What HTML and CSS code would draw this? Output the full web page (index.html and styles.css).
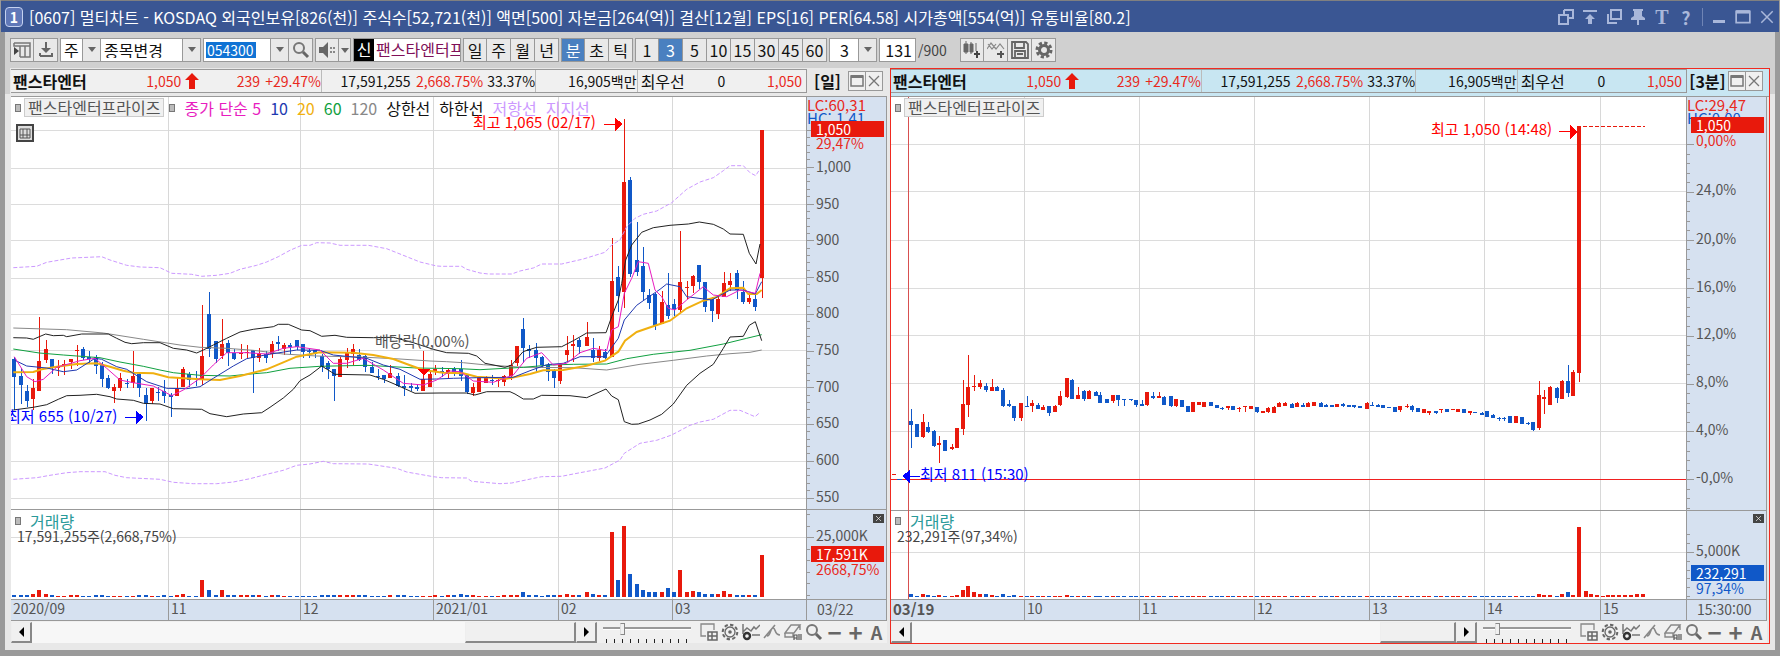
FILE: index.html
```html
<!DOCTYPE html>
<html lang="ko">
<head>
    <meta charset="UTF-8">
    <meta name="viewport" content="width=device-width, initial-scale=1.0">
    <title>[0607] 멀티차트</title>
    <link rel="stylesheet" href="styles.css">
</head>
<body>
    <svg class="symbols" aria-hidden="true">
        <symbol id="i-restore" viewBox="0 0 16 16"><path d="M6 1h9v8h-5M1 6h9v9H1zM6 6V1" fill="none" stroke="currentColor" stroke-width="2"/></symbol>
        <symbol id="i-top" viewBox="0 0 16 16"><path d="M1 1h14v2H1zM8 5l5 5h-3v5H6v-5H3z" fill="currentColor"/></symbol>
        <symbol id="i-copy" viewBox="0 0 16 16"><path d="M5 1h10v9H5zM2 5v9h9" fill="none" stroke="currentColor" stroke-width="2"/></symbol>
        <symbol id="i-pin" viewBox="0 0 16 16"><path d="M3 0h10v2h-1v5l3 2v2H9v5H7v-5H1V9l3-2V2H3z" fill="currentColor"/></symbol>
        <symbol id="i-panel" viewBox="0 0 18 18"><path d="M1 2h16v14H7M7 5h10M12 5v11M1 2v3h6v11" fill="none" stroke="#777" stroke-width="1.5"/><path d="M1 6l5 4-5 4z" fill="#444"/></symbol>
        <symbol id="i-down" viewBox="0 0 18 18"><path d="M9 1v9M3 15h12v-3M3 15v-3" fill="none" stroke="#666" stroke-width="2"/><path d="M4 7h10l-5 5z" fill="#666"/></symbol>
        <symbol id="i-find" viewBox="0 0 18 18"><circle cx="7" cy="7" r="5" fill="none" stroke="#777" stroke-width="2"/><path d="M11 11l5 5" stroke="#666" stroke-width="3"/></symbol>
        <symbol id="i-sound" viewBox="0 0 18 18"><path d="M1 6h4l5-5v16l-5-5H1z" fill="#666"/><path d="M12 6h2v2h-2zM12 10h2v2h-2zM15 6h2v2h-2zM15 10h2v2h-2z" fill="#888"/></symbol>
        <symbol id="i-candles" viewBox="0 0 18 18"><path d="M1 3h4v8H1zM7 3h3v8H7zM3 0v13M8 1v12M13 2v8" fill="#666" stroke="#666"/><path d="M11 13h6M14 10v7" stroke="#444" stroke-width="2"/></symbol>
        <symbol id="i-waves" viewBox="0 0 18 18"><path d="M0 8l4-6 5 6 4-5 4 5M1 3l4 5 4-5" fill="none" stroke="#888" stroke-width="1.2"/><path d="M10 13h7M14 10v7" stroke="#555" stroke-width="2"/></symbol>
        <symbol id="i-save" viewBox="0 0 18 18"><path d="M1 1h14l2 2v14H1zM4 1v6h9V1M4 17v-7h10v7M6 13h6" fill="none" stroke="#666" stroke-width="1.8"/></symbol>
        <symbol id="i-gear" viewBox="0 0 18 18"><circle cx="9" cy="9" r="7" fill="none" stroke="#666" stroke-width="3" stroke-dasharray="3.2 2.3"/><circle cx="9" cy="9" r="4.5" fill="none" stroke="#666" stroke-width="3"/></symbol>
        <symbol id="i-max" viewBox="0 0 14 14"><path d="M1 2h12v10H1z" fill="none" stroke="currentColor" stroke-width="1.5"/><path d="M1 1h12v3H1z" fill="currentColor"/></symbol>
        <symbol id="i-x" viewBox="0 0 14 14"><path d="M2 2l10 10M12 2L2 12" stroke="currentColor" stroke-width="1.3"/></symbol>
        <symbol id="i-up" viewBox="0 0 16 16"><path d="M8 0l7 7h-4v9H5V7H1z" fill="#e8190c"/></symbol>
        <symbol id="i-grid" viewBox="0 0 18 18"><path d="M1 1h16v16H1z" fill="#ddd" stroke="#444" stroke-width="2"/><path d="M4 5h10v9H4zM7 5v9M11 5v9M4 11h10" fill="none" stroke="#555"/></symbol>
        <symbol id="t-add" viewBox="0 0 18 18"><path d="M6 13H1V1h13v6" fill="none" stroke="#888" stroke-width="1.3"/><path d="M8 9h9v8H8zM12 9v8M8 13h9" fill="none" stroke="#666" stroke-width="1.5"/></symbol>
        <symbol id="t-gear" viewBox="0 0 18 18"><circle cx="9" cy="9" r="7.3" fill="none" stroke="#666" stroke-width="2" stroke-dasharray="3.4 2.3"/><circle cx="9" cy="9" r="5" fill="none" stroke="#666" stroke-width="1.3"/><circle cx="9" cy="9" r="1.8" fill="#666"/></symbol>
        <symbol id="t-line" viewBox="0 0 18 18"><path d="M1 1v10M1 9l4-4 4 3 3-4 2 2 4-4M10 12h8" fill="none" stroke="#777" stroke-width="1.5"/><circle cx="5" cy="13" r="3" fill="none" stroke="#333" stroke-width="2.4"/></symbol>
        <symbol id="t-draw" viewBox="0 0 18 18"><path d="M1 15L12 2M4 13c4 0 3-8 6-8s1 7 7 7" fill="none" stroke="#888" stroke-width="1.6"/></symbol>
        <symbol id="t-erase" viewBox="0 0 18 18"><path d="M1 10l6-8h9l-6 8zM1 10v4h8v-4M16 2v5" fill="none" stroke="#888" stroke-width="1.4"/><path d="M10 17v-5h3v5M10 15h3M15 11v6M17 11v6" fill="none" stroke="#555" stroke-width="1.2"/></symbol>
    </svg>

    <div class="window">
        <div class="titlebar">
            <span class="screen-no">1</span>
            <h1>[0607] 멀티차트 - KOSDAQ 외국인보유[826(천)] 주식수[52,721(천)] 액면[500] 자본금[264(억)] 결산[12월] EPS[16] PER[64.58] 시가총액[554(억)] 유통비율[80.2]</h1>
            <div class="title-buttons">
                <button aria-label="복원"><svg><use href="#i-restore"/></svg></button>
                <button aria-label="맨 위"><svg><use href="#i-top"/></svg></button>
                <button aria-label="복사"><svg><use href="#i-copy"/></svg></button>
                <button aria-label="고정"><svg><use href="#i-pin"/></svg></button>
                <button class="serif">T</button>
                <button>?</button>
                <i class="bar"></i>
                <button aria-label="최소화"><i class="min"></i></button>
                <button aria-label="최대화"><svg><use href="#i-max"/></svg></button>
                <button aria-label="닫기"><svg><use href="#i-x"/></svg></button>
            </div>
        </div>

        <div class="toolbar">
            <div class="group">
                <button aria-label="패널"><svg><use href="#i-panel"/></svg></button>
                <button aria-label="내리기"><svg><use href="#i-down"/></svg></button>
            </div>
            <div class="group">
                <div class="combo kind"><select aria-label="구분"><option>주</option></select></div>
                <div class="combo change"><select aria-label="종목변경"><option>종목변경</option></select></div>
            </div>
            <div class="group">
                <div class="combo code"><input type="text" value="054300" aria-label="종목코드"></div>
                <button aria-label="검색"><svg><use href="#i-find"/></svg></button>
            </div>
            <div class="group">
                <button aria-label="소리"><svg><use href="#i-sound"/></svg></button>
                <button class="drop" aria-label="소리 메뉴"></button>
            </div>
            <div class="group stock"><b>신</b><span>팬스타엔터프라이즈</span></div>
            <div class="group">
                <button>일</button>
                <button>주</button>
                <button>월</button>
                <button>년</button>
            </div>
            <div class="group">
                <button class="on">분</button>
                <button>초</button>
                <button>틱</button>
            </div>
            <div class="group">
                <button>1</button>
                <button class="on">3</button>
                <button>5</button>
                <button>10</button>
                <button>15</button>
                <button>30</button>
                <button>45</button>
                <button>60</button>
            </div>
            <div class="group">
                <div class="combo minute"><select aria-label="분 단위"><option>3</option></select></div>
            </div>
            <div class="group count"><input type="text" value="131" aria-label="봉 개수"></div>
            <span class="total">/900</span>
            <div class="group">
                <button aria-label="차트 추가"><svg><use href="#i-candles"/></svg></button>
                <button aria-label="지표 추가"><svg><use href="#i-waves"/></svg></button>
                <button aria-label="저장"><svg><use href="#i-save"/></svg></button>
                <button aria-label="설정"><svg><use href="#i-gear"/></svg></button>
            </div>
        </div>

        <div class="panels">
            <section class="panel">
                <header class="head">
                    <div class="quote">
                        <b>팬스타엔터</b>
                        <span class="up">1,050</span>
                        <svg><use href="#i-up"/></svg>
                        <span class="up">239</span>
                        <span class="up">+29.47%</span>
                        <span class="cut">17,591,255</span>
                        <span class="up">2,668.75%</span>
                        <span>33.37%</span>
                        <span class="cut">16,905백만</span>
                        <span class="cut best">최우선</span>
                        <span>0</span>
                        <span class="up">1,050</span>
                    </div>
                    <b class="period">[일]</b>
                    <button aria-label="최대화"><svg><use href="#i-max"/></svg></button>
                    <button aria-label="닫기"><svg><use href="#i-x"/></svg></button>
                </header>
                <div class="chart" data-chart="daily">
                    <div class="plot">
                        <svg class="canvas" viewBox="11 97 795 502" preserveAspectRatio="none"></svg>
                        <div class="legend">
                            <i class="dot"></i><span class="name">팬스타엔터프라이즈</span><i class="dot"></i>
                            <span class="ma5">종가 단순 5</span>
                            <span class="ma10">10</span>
                            <span class="ma20">20</span>
                            <span class="ma60">60</span>
                            <span class="ma120">120</span>
                            <span>상한선</span>
                            <span>하한선</span>
                            <span class="env">저항선</span>
                            <span class="env">지지선</span>
                        </div>
                        <button class="sheet" aria-label="표"><svg><use href="#i-grid"/></svg></button>
                        <div class="volume-legend">
                            <p><i class="dot"></i>거래량</p>
                            <p>17,591,255주(2,668,75%)</p>
                        </div>
                    </div>
                    <div class="axis"><button class="pane-close" aria-label="지표 닫기"><svg><use href="#i-x"/></svg></button></div>
                    <div class="times"></div>
                    <div class="now">03/22</div>
                </div>
                <footer class="tools">
                    <div class="scroll">
                        <button class="prev" aria-label="이전"></button>
                        <div class="thumb" style="width: 19%"></div>
                        <button class="next" aria-label="다음"></button>
                    </div>
                    <div class="zoom"><input type="range" value="20" aria-label="확대"></div>
                    <button aria-label="추가"><svg><use href="#t-add"/></svg></button>
                    <button aria-label="설정"><svg><use href="#t-gear"/></svg></button>
                    <button aria-label="지표"><svg><use href="#t-line"/></svg></button>
                    <button aria-label="그리기"><svg><use href="#t-draw"/></svg></button>
                    <button aria-label="모두 지우기"><svg><use href="#t-erase"/></svg></button>
                    <button aria-label="돋보기"><svg><use href="#i-find"/></svg></button>
                    <button class="sign">−</button>
                    <button class="sign">+</button>
                    <button class="auto">A</button>
                </footer>
            </section>

            <section class="panel active">
                <header class="head">
                    <div class="quote">
                        <b>팬스타엔터</b>
                        <span class="up">1,050</span>
                        <svg><use href="#i-up"/></svg>
                        <span class="up">239</span>
                        <span class="up">+29.47%</span>
                        <span class="cut">17,591,255</span>
                        <span class="up">2,668.75%</span>
                        <span>33.37%</span>
                        <span class="cut">16,905백만</span>
                        <span class="cut best">최우선</span>
                        <span>0</span>
                        <span class="up">1,050</span>
                    </div>
                    <b class="period">[3분]</b>
                    <button aria-label="최대화"><svg><use href="#i-max"/></svg></button>
                    <button aria-label="닫기"><svg><use href="#i-x"/></svg></button>
                </header>
                <div class="chart" data-chart="minute">
                    <div class="plot">
                        <svg class="canvas" viewBox="891 97 795 502" preserveAspectRatio="none"></svg>
                        <div class="legend">
                            <i class="dot"></i><span class="name">팬스타엔터프라이즈</span>
                        </div>
                        <div class="volume-legend">
                            <p><i class="dot"></i>거래량</p>
                            <p>232,291주(97,34%)</p>
                        </div>
                    </div>
                    <div class="axis"><button class="pane-close" aria-label="지표 닫기"><svg><use href="#i-x"/></svg></button></div>
                    <div class="times"></div>
                    <div class="now">15:30:00</div>
                </div>
                <footer class="tools">
                    <div class="scroll">
                        <button class="prev" aria-label="이전"></button>
                        <div class="thumb" style="width: 13%"></div>
                        <button class="next" aria-label="다음"></button>
                    </div>
                    <div class="zoom"><input type="range" value="15" aria-label="확대"></div>
                    <button aria-label="추가"><svg><use href="#t-add"/></svg></button>
                    <button aria-label="설정"><svg><use href="#t-gear"/></svg></button>
                    <button aria-label="지표"><svg><use href="#t-line"/></svg></button>
                    <button aria-label="그리기"><svg><use href="#t-draw"/></svg></button>
                    <button aria-label="모두 지우기"><svg><use href="#t-erase"/></svg></button>
                    <button aria-label="돋보기"><svg><use href="#i-find"/></svg></button>
                    <button class="sign">−</button>
                    <button class="sign">+</button>
                    <button class="auto">A</button>
                </footer>
            </section>
        </div>
    </div>

    <script src="script.js"></script>
</body>
</html>
```

FILE: styles.css
```css
* {
    box-sizing: border-box;
}

body {
    margin: 0;
    font-family: "Noto Sans CJK KR", "Liberation Sans", sans-serif;
    font-size: 14px;
    line-height: 16px;
    color: #111;
}

button, input, select {
    font: inherit;
    color: inherit;
    margin: 0;
    padding: 0;
    border: 0;
    border-radius: 0;
    background: none;
}

button {
    display: flex;
    align-items: center;
    justify-content: center;
}

p {
    margin: 0;
}

.symbols {
    display: none;
}

.window {
    display: flex;
    flex-direction: column;
    min-height: 100vh;
    background: #e8e8e8;
    border: solid #9a9a9a;
    border-width: 0 5px 6px;
}

/* title bar */
.titlebar {
    display: flex;
    align-items: center;
    gap: 6px;
    height: 32px;
    margin: 0 -4px;
    padding: 0 4px;
    background: #3a5693;
    border-top: 1px solid #808080;
    color: #fff;
}

.screen-no {
    width: 18px;
    height: 20px;
    border: 1px solid #c5d2f0;
    border-radius: 4px;
    background: #6078b8;
    font-weight: bold;
    line-height: 18px;
    text-align: center;
}

h1 {
    flex: 1;
    margin: 0;
    font-size: 16px;
    font-weight: normal;
    line-height: 24px;
    white-space: nowrap;
    overflow: hidden;
}

.title-buttons {
    display: flex;
    align-items: center;
    gap: 8px;
    color: #a9b7da;
}

.title-buttons button {
    width: 16px;
    height: 20px;
    font-size: 18px;
    font-weight: bold;
}

.title-buttons svg {
    width: 16px;
    height: 16px;
}

.title-buttons .serif {
    font-family: "Liberation Serif", serif;
    font-size: 20px;
}

.title-buttons .bar {
    width: 1px;
    height: 18px;
    background: #6f84b5;
}

.title-buttons .min {
    width: 12px;
    height: 3px;
    margin-top: 10px;
    background: #a9b7da;
}

/* toolbar */
.toolbar {
    display: flex;
    align-items: center;
    gap: 2px;
    height: 36px;
    padding: 0 5px;
    background: #d0d0d0;
    font-size: 16px;
}

.group {
    display: flex;
    height: 24px;
    border: 1px solid #999;
    background: #e9e9e9;
}

.group > * + * {
    border-left: 1px solid #999;
}

.group button {
    width: 24px;
    height: 22px;
}

.group > button:first-child {
    width: 22px;
}

.group svg {
    flex: none;
    width: 18px;
    height: 18px;
}

.group button.on {
    background: #4a80c0;
    color: #fff;
}

.group .drop {
    width: 12px;
}

.combo {
    position: relative;
    display: flex;
    background: #fff;
}

.combo select, .combo input {
    appearance: none;
    width: 100%;
    padding: 0 18px 0 3px;
    outline: none;
}

.combo::after {
    content: "";
    position: absolute;
    top: 0;
    right: 0;
    bottom: 0;
    width: 17px;
    border-left: 1px solid #999;
    background: #e9e9e9;
}

.combo::before, .drop::before {
    content: "";
    z-index: 1;
    width: 0;
    height: 0;
    border: 4px solid transparent;
    border-top: 5px solid #666;
    border-bottom: 0;
}

.combo::before {
    position: absolute;
    top: 8px;
    right: 4px;
}

.kind { width: 39px; }
.change { width: 100px; }
.code { width: 84px; }
.minute { width: 46px; }

.kind select {
    padding-right: 17px;
}

.minute select {
    padding-left: 10px;
}

.code input {
    background: linear-gradient(#1173d4, #1173d4) 2px 3px / 50px 16px no-repeat;
    color: #fff;
    font-size: 14px;
}

.stock {
    width: 108px;
    background: #fff;
    overflow: hidden;
    white-space: nowrap;
    line-height: 21px;
}

.stock b {
    flex: none;
    width: 20px;
    background: #000;
    color: #fff;
    font-weight: normal;
    text-align: center;
}

.stock span {
    padding-left: 2px;
    border: 0;
    color: #801058;
}

.count {
    width: 37px;
    background: #fff;
}

.count input {
    width: 100%;
    padding-right: 3px;
    text-align: right;
}

.total {
    width: 40px;
    color: #444;
    font-size: 14px;
}

/* panels */
.panels {
    flex: 1;
    display: grid;
    grid-template-columns: 1fr 1fr;
    padding: 0 5px 6px;
    background: linear-gradient(#d0d0d0 26px, #e8e8e8 26px);
}

.panel {
    display: flex;
    flex-direction: column;
    min-width: 0;
    padding-right: 2px;
    border: 1px solid transparent;
    background: #e8e8e8;
}

.panel.active {
    border-color: #f02a20;
}

.head {
    display: flex;
    align-items: center;
    height: 28px;
    padding-bottom: 3px;
    border-bottom: 1px solid #999;
}

.active .head {
    margin-right: -2px;
    background: #c8e6f2;
}

.quote {
    flex: 1;
    display: grid;
    grid-template-columns: 134fr 37fr 18fr 60fr 61fr 90fr 73fr 52fr 102fr 50fr 39fr 77fr;
    align-items: center;
    height: 24px;
    padding-right: 4px;
    border: 1px solid #999;
    border-left: 0;
    background: #f0f0f0;
    text-align: right;
    white-space: nowrap;
}

.active .quote {
    background: #c8e6f2;
}

.quote b {
    padding-left: 2px;
    font-size: 16px;
    text-align: left;
}

.quote svg {
    width: 16px;
    height: 16px;
    margin-left: 3px;
}

.quote .cut {
    border-left: 1px solid #bbb;
    line-height: 22px;
}

.quote .best {
    padding-left: 3px;
    font-size: 16px;
    text-align: left;
}

.up {
    color: #e8291c;
}

.head .period {
    width: 41px;
    font-size: 16px;
    text-align: center;
}

.head button {
    width: 18px;
    height: 20px;
    border: 1px solid #999;
    background: #f0f0f0;
    color: #777;
}

.head button + button {
    margin: 0 4px 0 -1px;
}

.active .head button + button {
    margin-right: 6px;
}

.head button svg {
    width: 14px;
    height: 14px;
}

.chart {
    flex: 1;
    display: grid;
    grid-template-columns: 1fr 81px;
    grid-template-rows: 1fr 22px;
    color: #555;
}

.plot, .axis, .times {
    position: relative;
    overflow: hidden;
    white-space: nowrap;
}

.plot {
    background: #fff;
}

.canvas {
    position: absolute;
    width: 100%;
    height: 100%;
    shape-rendering: crispEdges;
}

.canvas polyline {
    shape-rendering: auto;
}

.axis {
    background: #d6e1f0;
    border: solid #999;
    border-width: 0 1px 0 1px;
}

.times, .now {
    border: solid #999;
    border-width: 1px 1px 1px 0;
    background: #d6e1f0;
    line-height: 18px;
}

.now {
    padding-left: 10px;
    border-left: 1px solid #999;
}

.times {
    border-right: 0;
}

.legend {
    position: absolute;
    top: 1px;
    left: 4px;
    display: flex;
    align-items: center;
    gap: 9px;
    font-size: 16px;
    line-height: 18px;
    color: #111;
}

.dot {
    display: inline-block;
    width: 6px;
    height: 8px;
    border: 1px solid #777;
    background: #bbb;
}

.legend .dot + .name {
    margin-left: -6px;
}

.legend .name + .dot {
    margin-left: -4px;
}

.name {
    padding: 0 3px;
    border: 1px solid #ccc;
    background: #f0f0f0;
    color: #555;
    line-height: 17px;
}

.ma5 { color: #e81cc0; }
.ma10 { color: #2038b0; }
.ma20 { color: #f0b010; }
.ma60 { color: #10a040; }
.ma120 { color: #888; }
.env { color: #cc99ff; }

.sheet {
    position: absolute;
    top: 27px;
    left: 5px;
}

.sheet svg {
    width: 18px;
    height: 18px;
}

.volume-legend {
    position: absolute;
    top: 83%;
    left: 4px;
    color: #444;
}

.volume-legend p {
    line-height: 15px;
}

.volume-legend p:first-child {
    display: flex;
    align-items: center;
    gap: 9px;
    color: #2a9a9a;
    font-size: 16px;
}

.volume-legend p + p {
    padding-left: 2px;
}

/* labels put on the charts by script.js */
.mark, .tag, .note, .time {
    position: absolute;
    transform: translateY(-50%);
}

.mark, .tag {
    left: 9px;
}

.mark.wide {
    left: 0;
    font-size: 15px;
}

.tick {
    position: absolute;
    left: 0;
    width: 3px;
    height: 1px;
    background: #999;
}

.tick.major {
    width: 7px;
}

.tag {
    left: 4px;
    right: 2px;
    padding-left: 5px;
    background: #e8190c;
    color: #fff;
}

.tag.fall {
    background: #1058c8;
}

.red { color: #e8291c; }
.blue { color: #1058c8; }

.note {
    font-size: 15px;
}

.note.high { color: #f00; }
.note.low { color: #00f; }

.time {
    top: 10px;
    height: 22px;
    padding-left: 2px;
    border-left: 1px solid #999;
    line-height: 19px;
}

.time.first {
    border: 0;
}

.time.day {
    font-size: 15px;
    font-weight: bold;
}

.pane-line {
    position: absolute;
    width: 100%;
    height: 1px;
    background: #999;
}

.pane-close {
    position: absolute;
    top: 83%;
    right: 2px;
    width: 11px;
    height: 9px;
    background: #444;
    color: #fff;
}

.pane-close svg {
    width: 7px;
    height: 7px;
}

/* scroll and drawing tools */
.tools {
    display: flex;
    align-items: center;
    height: 22px;
    background: #f0f0f0;
    color: #666;
}

.scroll {
    flex: 1;
    display: flex;
    justify-content: flex-end;
    height: 21px;
    background: #f7f7f7;
}

.scroll button, .thumb {
    border: 1px solid #eee;
    border-right: 2px solid #888;
    border-bottom: 2px solid #888;
    background: #f0f0f0;
}

.scroll button {
    width: 21px;
}

.scroll .prev {
    margin-right: auto;
}

.prev::before, .next::before {
    content: "";
    border: 5px solid transparent;
}

.prev::before {
    border-left: 0;
    border-right-color: #000;
}

.next::before {
    border-right: 0;
    border-left-color: #000;
}

.zoom {
    width: 101px;
    height: 22px;
    padding: 0 6px;
    background: repeating-linear-gradient(90deg, #222 0 1px, transparent 1px 8px) 9px 18px / 82px 4px no-repeat;
}

.zoom input {
    appearance: none;
    display: block;
    width: 88px;
    height: 15px;
}

.zoom input::-webkit-slider-runnable-track {
    height: 3px;
    border-top: 2px solid #999;
    border-bottom: 1px solid #fff;
}

.zoom input::-webkit-slider-thumb {
    appearance: none;
    width: 5px;
    height: 12px;
    margin-top: -6px;
    border: 1px solid #888;
    border-left-color: #ddd;
    background: #f0f0f0;
}

.tools > button {
    width: 21px;
    height: 20px;
}

.tools > button svg {
    width: 18px;
    height: 18px;
}

.tools .sign {
    font-size: 24px;
    font-weight: bold;
}

.tools .auto {
    font-size: 18px;
    font-weight: bold;
}
```

FILE: script.js
```js
// Shapes are kept in thirds of a pixel, each block measured from its own origin.
// Candle rows: x, high, body top, body bottom, low, colour, volume height
const charts = {
    daily: {
        left: 11,
        split: 509,
        cols: [168, 300, 433, 558, 672],
        rows: [130, 168, 204, 240, 278, 314, 350, 387, 424, 461, 498, 537],
        candles: [
            [0, 130, `43 680 687 740 840 b 6|62 715 738 764 823 b 6|81 765 784 812 832 b 6|99 748 773 808 840 r 10
118 562 693 782 782 r 21|137 630 656 690 698 r 10|156 687 687 714 733 b 6|175 690 708 713 738 r 3
193 690 702 706 735 r 3|212 686 686 696 718 r 6|230 645 659 663 708 r 6|249 652 656 685 690 b 3
268 664 682 686 700 b 3|287 676 680 708 732 b 6|305 697 704 748 771 b 6|324 736 745 774 778 b 3
343 762 772 782 820 r 3|361 728 745 774 782 r 3|380 746 758 761 773 b 3|399 664 738 760 775 r 3
418 730 732 774 800 b 6|437 773 795 823 872 b 6|456 773 773 812 822 r 3|474 770 786 789 812 b 3
493 750 784 797 820 b 6|512 788 795 801 861 b 3|530 745 778 797 797 r 6|549 710 716 772 772 r 10
568 727 732 750 770 b 3|587 724 744 748 768 b 3|605 525 679 749 765 r 51|628 487 551 658 682 b 21
647 633 633 686 700 b 6|666 566 641 678 686 r 21|684 630 640 670 708 b 6|703 657 669 686 690 b 6
722 643 669 673 688 r 6|740 645 666 670 685 r 6|759 660 660 684 790 b 6|778 655 671 683 697 r 6
797 664 672 684 698 b 3|815 634 641 672 684 r 6|834 619 635 642 664 b 6|853 640 645 657 676 r 3
871 640 645 652 672 b 3|890 630 630 651 660 b 3|909 641 641 667 684 b 3|928 655 664 667 684 b 3
946 660 660 672 685 b 3|965 672 679 710 725 b 6|984 694 700 716 748 b 6|1003 716 718 738 813 b 6
1021 682 686 741 741 r 6|1040 655 668 690 714 r 6|1059 641 657 671 705 r 6|1078 656 675 690 694 b 6
1096 674 678 710 726 b 6|1115 695 710 729 729 b 3|1134 718 738 742 750 b 3|1153 735 735 747 760 b 3
1171 706 728 745 745 r 6|1194 730 738 767 772 b 6|1213 735 769 773 797 b 6|1232 758 769 773 783 b 3
1250 766 772 776 783 b 3|1269 664 748 782 782 r 3|1289 722 732 771 771 r 3|1306 705 718 722 735 r 6
1325 710 723 727 742 b 3|1344 714 720 733 745 r 6|1363 710 718 733 738 b 6`],
            [440, 100, `62 780 807 828 842 b 10|81 822 825 876 882 b 6|99 848 862 878 887 r 6|118 830 833 875 875 r 3
137 828 830 850 850 r 3|155 825 840 843 854 b 3|174 835 839 843 860 r 3|193 825 829 846 857 r 6
212 780 794 828 840 r 6|230 738 738 790 798 r 6|249 653 686 745 788 b 14|268 735 748 752 773 b 6
287 730 749 774 817 b 6|305 768 772 794 803 b 3|324 790 795 816 842 b 6|343 808 812 835 865 b 6
361 792 792 842 853 r 6|380 708 749 765 782 r 10|399 705 731 737 787 r 6|418 715 719 742 763 b 6
440 667 712 738 738 r 14|459 715 750 775 787 b 10|478 738 750 775 782 r 6|496 746 755 773 776 b 6
515 415 543 771 771 r 196|534 499 532 588 637 b 51|553 57 247 577 625 r 212|571 232 240 521 532 b 70
590 367 480 516 528 b 40|609 442 499 577 600 b 21|628 566 584 610 626 b 14|646 580 583 678 689 b 14
665 574 606 672 672 r 14|684 518 615 648 656 b 28|703 597 611 627 647 b 14|721 394 547 630 635 r 81
740 543 562 565 598 r 14|759 524 528 558 580 r 17|778 495 495 546 567 b 14|796 547 547 620 636 b 10
815 590 598 633 667 b 10|834 590 596 641 658 r 10|852 517 548 590 590 r 17|871 520 544 555 574 r 10
890 510 520 570 598 b 6|908 543 575 605 612 b 6|928 583 593 605 612 r 6|946 580 596 621 632 b 6
965 91 91 535 594 r 126`]
        ],
        lines: [
            ['#888', 1, [0, 130, '40,594 200,599 310,609 430,628 540,645 600,652 680,655 760,661 850,672 950,678 1080,681 1200,687 1290,693'], [440, 100, '20,785 70,788 130,794 250,802 400,803 500,810 600,793 700,781 800,768 870,761 930,757 965,750']],
            ['#10a040', 1, [0, 130, '40,657 118,669 190,675 300,683 360,696 430,709 480,720 520,728 600,736 690,738 740,733 800,728 870,715 960,709 1100,706 1250,714'], [440, 100, '60,806 120,809 250,802 330,795 400,793 500,792 560,776 640,763 750,751 850,732 920,715 965,704']],
            ['#f0b010', 2, [0, 130, '40,727 100,726 125,718 170,710 230,702 290,700 330,710 370,722 400,728 460,730 480,735 505,742 600,748 660,750 720,738 800,718 850,697 890,680 960,667 1060,668 1120,675 1180,687 1230,706 1270,720'], [440, 100, '10,818 70,820 110,830 200,836 270,822 310,811 370,810 440,797 495,782 535,755 555,722 590,696 640,679 690,662 740,625 790,602 830,591 870,565 910,563 925,582 950,582 965,570']],
            ['#2038b0', 1, [0, 130, '43,690 80,708 140,714 190,725 230,720 285,685 305,688 350,710 380,718 440,755 500,775 560,776 600,770 640,745 700,708 740,686 800,674 890,660 960,661 1000,675 1050,680 1100,685 1150,705 1200,718 1260,748 1310,747'], [440, 100, '40,835 110,833 220,832 270,812 320,794 370,790 420,770 495,770 535,715 553,660 590,616 620,595 660,568 680,552 720,560 740,590 815,600 870,570 910,570 946,582 965,545']],
            ['#e81cc0', 1, [0, 130, '43,680 80,740 105,755 130,748 170,712 240,692 285,685 320,715 360,750 400,758 460,768 515,797 550,780 600,745 640,705 680,668 740,668 800,672 850,655 890,650 960,660 1000,700 1040,700 1090,685 1150,720 1210,760 1270,765 1310,750 1350,723'], [440, 100, '60,815 100,843 160,847 220,825 260,775 305,758 340,795 380,790 420,758 460,745 500,752 515,690 535,680 553,580 575,535 595,485 625,490 645,570 665,590 685,625 705,630 740,600 790,560 820,585 860,590 900,570 946,580 960,520']],
            ['#222', 1, [0, 130, '40,623 80,624 100,628 118,620 137,612 160,617 190,616 200,620 245,612 325,612 350,625 375,637 395,641 430,638 480,638 520,655 560,660 590,669 610,660 640,645 680,625 720,606 760,598 820,590 835,583 865,583 905,600 930,602 965,619 1005,616 1040,622 1120,623 1180,622 1240,638 1300,658'], [440, 100, '20,758 85,760 110,768 135,790 195,802 215,795 249,755 290,742 365,740 400,722 440,699 498,698 515,650 535,600 545,550 557,480 575,435 605,397 640,383 690,376 745,372 778,366 820,373 850,387 870,402 910,403 928,460 948,492 960,432']],
            ['#222', 1, [0, 130, '40,840 100,832 140,824 175,808 200,797 240,796 290,793 330,800 350,807 400,811 430,820 480,822 520,836 605,838 630,851 680,860 730,852 785,848 810,832 850,804 880,778 900,752 930,735 965,708 1005,733 1110,735 1150,748 1190,765 1245,790'], [440, 100, '0,879 80,879 105,885 140,875 210,875 225,882 250,897 280,897 305,886 390,887 440,893 498,867 515,888 535,899 553,965 575,973 595,972 630,960 665,943 700,912 740,856 780,820 820,793 850,745 870,711 910,709 928,676 946,665 965,722']],
            ['#cc99ff', 1, [0, 130, '40,413 110,409 140,397 215,384 305,380 330,390 380,406 420,411 480,413 515,430 575,433 605,439 650,436 690,430 720,418 770,406 800,396 835,380 870,361 905,346 930,346 950,338 990,339 1020,346 1105,346 1160,356 1200,372 1260,396 1310,408'], [440, 100, '5,499 65,499 80,508 120,519 145,522 215,522 240,513 280,504 305,492 365,492 430,477 495,457 515,435 540,420 560,380 585,355 610,343 650,333 695,308 740,268 780,246 820,233 850,212 870,197 910,197 930,218 947,227 958,210'], 'dash'],
            ['#cc99ff', 1, [0, 420, '40,178 110,173 150,166 200,158 240,155 315,155 345,166 380,173 480,178 520,187 580,191 650,191 700,186 750,176 800,163 850,151 890,136 930,132 970,124 1000,131 1105,132 1190,145 1220,156 1300,170'], [440, 420, '5,173 80,174 95,184 180,191 215,189 290,173 305,170 365,169 400,162 495,144 540,120 553,100 600,70 650,61 695,45 750,16 780,6 820,-2 870,-29 900,-29 945,-10 957,-20'], 'dash']
        ],
        extra: '<path d="M604 124.500h12" stroke="#f00"/><path d="M615 118l8 6-8 7z" fill="#f00"/>' +
            '<path d="M125 417.500h12" stroke="#00f"/><path d="M136 411l8 6-8 7z" fill="#00f"/>' +
            '<path d="M417 369h13l-6 7z" fill="#f00"/>',
        notes: [[473, 122, '최고 1,065 (02/17)', 'high'], [7, 416, '최저 655 (10/27)', 'low'], [375, 341, '배당락(0,00%)', '']],
        marks: [[105, 'LC:60,31', 'wide red'], [118, 'HC: 1,41', 'wide blue'], [143, '29,47%', 'red'], [166, '1,000'], [203, '950'], [239, '900'], [276, '850'], [312, '800'], [349, '750'], [386, '700'], [422, '650'], [459, '600'], [496, '550'], [535, '25,000K'], [569, '2668,75%', 'red']],
        tags: [[129, '1,050', ''], [554, '17,591K', '']],
        ticks: [130, 498, 36.75, 5],
        volumeTicks: [537, 597, 11.5],
        times: [[11, '2020/09', 'first'], [168, '11'], [300, '12'], [433, '2021/01'], [558, '02'], [672, '03']]
    },
    minute: {
        left: 891,
        split: 510,
        cols: [1024, 1139, 1254, 1369, 1484, 1600],
        rows: [144, 191, 240, 288, 335, 383, 431, 552],
        candles: [
            [880, 320, `92 266 303 314 385 b 10|111 311 311 352 352 b 3|129 281 307 352 355 r 10|144 307 321 337 340 b 6
163 330 333 378 381 b 3|178 348 370 376 430 r 6|196 360 360 392 392 b 3|215 372 382 388 390 r 3
231 325 325 385 385 r 6|249 180 251 328 344 r 21|264 104 202 254 292 r 33|283 165 197 201 212 r 14
301 180 190 202 206 r 10|317 190 197 210 215 b 10|336 176 202 213 213 r 6|351 198 201 213 213 b 3
369 205 209 259 262 b 10|388 240 251 259 262 b 3|403 258 258 295 302 b 6|422 250 250 295 302 r 3
441 228 258 261 262 b 3|456 240 249 258 277 r 3|475 250 254 268 268 b 3|489 256 262 269 269 r 3
508 258 258 280 287 b 3|526 256 258 276 276 r 3|541 213 228 254 258 r 3|560 175 175 232 235 r 6
575 177 180 236 236 b 3|594 202 224 236 236 r 3|613 210 213 236 242 b 3|628 210 213 236 236 r 3
647 213 216 227 227 b 3|661 217 224 250 250 b 3|680 236 237 250 250 b 3|699 224 224 242 250 r 3
714 224 224 239 258 b 3|733 236 237 240 258 b 3|752 236 237 241 243 b 3|767 239 240 255 262 b 3
785 240 251 258 258 b 3|800 217 217 254 258 r 3|819 216 228 234 238 b 3|838 216 227 235 235 r 3
853 228 232 254 254 b 3|872 228 228 258 262 b 3|887 236 237 258 262 r 3|905 239 240 261 261 b 3
924 258 258 277 277 b 3|939 247 247 277 277 r 3|958 247 247 254 254 r 3|973 246 247 261 261 r 3
992 247 247 257 257 b 3|1010 254 254 265 265 b 3|1025 262 263 266 269 b 3|1044 258 259 265 269 r 3
1059 258 259 269 269 b 3|1078 261 263 268 277 r 3|1096 258 259 262 277 r 3|1112 258 259 268 268 r 3
1130 261 262 277 280 b 3|1149 272 273 280 280 r 3|1164 262 263 277 280 r 3|1183 258 261 280 280 r 3
1198 246 248 262 262 r 3|1216 247 250 258 258 r 3|1235 250 251 265 265 b 3|1250 246 249 261 261 r 3
1269 250 254 260 260 b 3|1284 247 250 262 262 r 3|1303 246 247 257 257 r 3`],
            [1320, 320, `3 247 250 260 262 b 3|17 252 255 260 262 b 3|36 254 255 261 261 b 3|50 251 251 261 261 r 3
69 250 252 258 262 b 3|88 254 255 261 261 b 3|103 254 256 260 264 b 3|121 258 259 264 264 b 3
140 247 248 266 268 r 3|155 247 254 258 258 b 3|174 251 254 261 261 b 3|189 254 255 264 264 b 3
208 262 262 265 265 b 3|226 262 262 276 276 b 3|241 258 259 269 276 r 3|260 251 257 261 264 r 3
276 256 258 270 276 b 3|294 263 264 276 276 b 3|313 266 266 278 278 r 3|328 273 274 278 284 r 3
347 273 274 279 283 b 3|362 267 267 270 280 r 3|380 266 266 276 276 b 3|399 267 267 270 270 r 3
414 266 266 276 276 r 3|432 266 266 279 279 b 3|451 273 274 280 284 r 3|466 276 277 280 280 b 3
485 276 278 284 284 b 3|500 273 273 291 291 b 3|519 283 285 294 294 b 3|538 292 293 296 303 b 3
553 292 293 296 303 b 3|571 288 288 310 310 b 3|587 288 288 310 310 r 3|605 291 292 311 311 b 3
624 307 308 311 315 b 3|640 305 307 330 333 b 3|658 183 225 325 329 r 10|673 210 232 238 281 r 6
691 198 202 254 254 r 6|710 202 203 235 250 b 3|726 180 183 236 236 r 10|744 134 183 219 231 b 14
759 150 157 228 228 r 6|778 -582 -582 160 187 r 210|797 -582 -582 -582 -582 r 17|812 -582 -582 -582 -582 r 10
831 -582 -582 -582 -582 r 6|850 -582 -582 -582 -582 r 3|865 -582 -582 -582 -582 r 6|880 -582 -582 -582 -582 r 6
897 -582 -582 -582 -582 r 6|914 -582 -582 -582 -582 r 6|932 -582 -582 -582 -582 r 6|950 -582 -582 -582 -582 r 10
969 -582 -582 -582 -582 r 10`]
        ],
        lines: [],
        extra: '<path d="M891 479.500h795" stroke="#f02020"/><path d="M908.500 97v502" stroke="#d85050"/>' +
            '<path d="M892 474.500h4" stroke="#e8190c"/><path d="M897 479.500h5" stroke="#1058c8"/>' +
            '<path d="M1559 131.500h12" stroke="#f00"/><path d="M1570 125l8 7-8 7z" fill="#f00"/>' +
            '<path d="M1583 126.500h62" stroke="#e8190c" stroke-dasharray="4 2"/>' +
            '<path d="M908 476.500h12" stroke="#00f"/><path d="M910 470l-8 6 8 7z" fill="#00f"/>',
        notes: [[1431, 129, '최고 1,050 (14:48)', 'high'], [920, 474, '최저 811 (15:30)', 'low']],
        marks: [[105, 'LC:29,47', 'wide red'], [118, 'HC:0,00', 'wide blue'], [140, '0,00%', 'red'], [189, '24,0%'], [238, '20,0%'], [286, '16,0%'], [333, '12,0%'], [381, '8,0%'], [429, '4,0%'], [477, '-0,0%'], [550, '5,000K'], [588, '97,34%', 'blue']],
        tags: [[125, '1,050', ''], [573, '232,291', 'fall']],
        ticks: [144, 509, 47.9, 5],
        volumeTicks: [552, 597, 8.8],
        times: [[891, '03/19', 'first day'], [1024, '10'], [1139, '11'], [1254, '12'], [1369, '13'], [1484, '14'], [1600, '15']]
    }
};

const TOP = 97;
const WIDTH = 795;
const HEIGHT = 502;
const BASE = 597;
const colours = { r: '#e8190c', b: '#1058c8' };

function rect(x, y, w, h, fill) {
    return `<rect x="${x}" y="${y}" width="${w}" height="${h}" fill="${fill}"/>`;
}

function drawCandles(blocks) {
    let out = '';
    blocks.forEach(([ox, oy, text]) => {
        text.split(/[|\n]/).forEach((row) => {
            const p = row.trim().split(' ');
            const x = Math.round(ox + p[0] / 3);
            const [high, top, bottom, low] = p.slice(1, 5).map((v) => Math.round(oy + v / 3));
            const fill = colours[p[5]];
            const volume = Math.max(1, Math.round(p[6] / 3));
            if (low > high) {
                out += rect(x, high, 1, low - high, fill);
                out += rect(x - 2, top, 4, Math.max(1, bottom - top), fill);
            }
            out += rect(x - 2, BASE - volume, 4, volume, fill);
        });
    });
    return out;
}

function drawLine([stroke, width, first, second, dash]) {
    const points = [first, second].flatMap(([ox, oy, text]) =>
        text.split(' ').map((pair) => {
            const [x, y] = pair.split(',');
            return `${(ox + x / 3).toFixed(1)},${(oy + y / 3).toFixed(1)}`;
        })
    );
    return `<polyline points="${points.join(' ')}" fill="none" stroke="${stroke}" stroke-width="${width}"${dash ? ' stroke-dasharray="4 2"' : ''}/>`;
}

function add(parent, className, text, left, top) {
    const el = document.createElement('span');
    el.className = className;
    el.textContent = text;
    if (left !== null) el.style.left = `${(left / WIDTH) * 100}%`;
    if (top !== null) el.style.top = `${((top - TOP) / HEIGHT) * 100}%`;
    parent.appendChild(el);
}

document.querySelectorAll('.chart').forEach((el) => {
    const c = charts[el.dataset.chart];
    const plot = el.querySelector('.plot');
    const axis = el.querySelector('.axis');
    const times = el.querySelector('.times');

    let svg = '';
    c.rows.forEach((y) => (svg += rect(c.left, y, WIDTH, 1, '#dcdcdc')));
    c.cols.forEach((x) => (svg += rect(x, TOP, 1, HEIGHT, '#d8d8d8')));
    svg += rect(c.left, c.split, WIDTH, 1, '#999');
    svg += drawCandles(c.candles) + c.lines.map(drawLine).join('') + c.extra;
    el.querySelector('.canvas').innerHTML = svg;

    c.notes.forEach(([x, y, text, kind]) => add(plot, `note ${kind}`, text, x - c.left, y));

    add(axis, 'pane-line', '', null, c.split);
    const [start, end, step, parts] = c.ticks;
    for (let i = 0; start + (i * step) / parts <= end; i++) {
        add(axis, i % parts ? 'tick' : 'tick major', '', null, start + (i * step) / parts);
    }
    const [major, floor, gap] = c.volumeTicks;
    for (let y = major - 2 * gap; y < floor; y += gap) {
        add(axis, Math.abs(y - major) < 1 ? 'tick major' : 'tick', '', null, y);
    }
    c.marks.forEach(([y, text, kind]) => add(axis, `mark ${kind || ''}`, text, null, y));
    c.tags.forEach(([y, text, kind]) => add(axis, `tag ${kind}`, text, null, y));

    c.times.forEach(([x, text, kind]) => add(times, `time ${kind || ''}`, text, x - c.left, null));
});
```
